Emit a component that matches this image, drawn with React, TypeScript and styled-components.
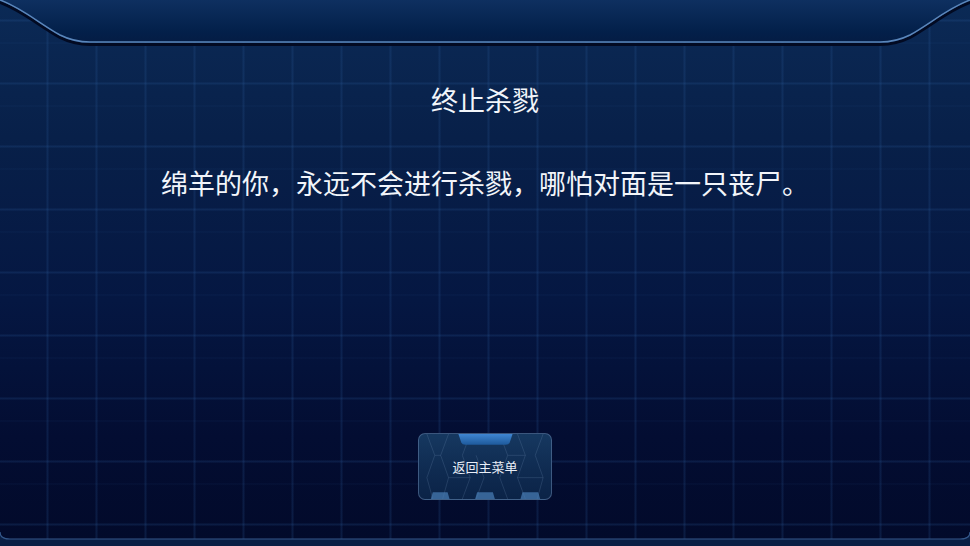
import React from 'react';
import styled, { createGlobalStyle } from 'styled-components';

const GlobalStyle = createGlobalStyle`
  html, body {
    margin: 0;
    padding: 0;
    background: #020a28;
  }
  * { box-sizing: border-box; }
`;

const Screen = styled.div`
  width: 970px;
  height: 546px;
  position: relative;
  overflow: hidden;
  display: flex;
  flex-direction: column;
  font-family: "Noto Sans CJK SC", "Noto Sans", sans-serif;
  color: #f2f5fa;
  background:
    repeating-linear-gradient(90deg,
      transparent 0 46px,
      rgba(45, 95, 160, 0.1) 46px 47px,
      rgba(45, 95, 160, 0.2) 47px 48px,
      rgba(45, 95, 160, 0.1) 48px 49px,
      transparent 49px 49px),
    repeating-linear-gradient(180deg,
      transparent 0 19px,
      rgba(45, 95, 160, 0.1) 19px 20px,
      rgba(45, 95, 160, 0.2) 20px 21px,
      rgba(45, 95, 160, 0.1) 21px 22px,
      transparent 22px 63px),
    repeating-linear-gradient(180deg,
      transparent 0 42px,
      rgba(45, 95, 160, 0.05) 42px 44px,
      transparent 44px 63px),
    linear-gradient(180deg, #0b2a56 0%, #082049 25%, #051742 55%, #030d32 80%, #020a2a 100%);
`;

const Bezel = styled.svg`
  display: block;
  width: 970px;
  height: 48px;
  flex: none;
`;

const BottomEdge = styled.svg`
  position: absolute;
  left: 0;
  bottom: 0;
  width: 970px;
  height: 14px;
  pointer-events: none;
`;

const Content = styled.main`
  flex: 1;
  display: flex;
  flex-direction: column;
  align-items: center;
  padding-bottom: 46px;
`;

const Title = styled.h1`
  margin: 34px 0 0;
  font-size: 27px;
  line-height: 36px;
  font-weight: 400;
`;

const Message = styled.p`
  margin: 47px 0 0;
  font-size: 27px;
  line-height: 36px;
  font-weight: 400;
`;

const MenuButton = styled.button`
  margin-top: auto;
  position: relative;
  width: 134px;
  height: 67px;
  padding: 0;
  border: 1px solid rgba(100, 130, 170, 0.55);
  border-radius: 7px;
  background: linear-gradient(180deg, #163860 0%, #0f2b51 55%, #0b2347 100%);
  color: #e8eef7;
  font-family: "Noto Sans CJK SC", sans-serif;
  font-size: 13px;
  cursor: pointer;
  overflow: hidden;
  > span {
    position: relative;
  }
`;

const ButtonArt = styled.svg`
  position: absolute;
  left: 0;
  top: 0;
  width: 100%;
  height: 100%;
`;

const Bezelshape = () => (
  <Bezel viewBox="0 0 970 48">
    <defs>
      <linearGradient id="bezelFill" x1="0" y1="0" x2="0" y2="1">
        <stop offset="0" stopColor="#0e3060" />
        <stop offset="0.75" stopColor="#03204a" />
        <stop offset="1" stopColor="#041c44" />
      </linearGradient>
    </defs>
    <path
      d="M0 0 L970 0 C948 8 930 24 910 35 C900 40 892 42 880 42 L90 42 C78 42 70 40 60 35 C40 24 22 8 0 0 Z"
      fill="url(#bezelFill)"
    />
    <path
      d="M0 2.5 C22 10.5 40 26.5 60 37.5 C70 42.5 78 44.5 90 44.5 L880 44.5 C892 44.5 900 42.5 910 37.5 C930 26.5 948 10.5 970 2.5"
      fill="none"
      stroke="#020a22"
      strokeWidth="3"
    />
    <path
      d="M0 0 C22 8 40 24 60 35 C70 40 78 42 90 42 L880 42 C892 42 900 40 910 35 C930 24 948 8 970 0"
      fill="none"
      stroke="#5a86bb"
      strokeWidth="1.6"
    />
  </Bezel>
);

const BottomFrame = () => (
  <BottomEdge viewBox="0 0 970 14">
    <path d="M0 0 Q0 7 10 7 L960 7 Q970 7 970 0 L970 14 L0 14 Z" fill="#0a1f45" />
    <path d="M0 0 Q0 7 10 7 L960 7 Q970 7 970 0" fill="none" stroke="#34578a" strokeWidth="1.2" />
  </BottomEdge>
);

const HexPattern = () => (
  <ButtonArt viewBox="0 0 134 67" preserveAspectRatio="none">
    <defs>
      <linearGradient id="tabTop" x1="0" y1="0" x2="0" y2="1">
        <stop offset="0" stopColor="#3f86d2" />
        <stop offset="1" stopColor="#1e5a9c" />
      </linearGradient>
    </defs>
    <g fill="none" stroke="rgba(130,160,200,0.2)" strokeWidth="1">
      <polyline points="8,0 16,22 8,45 14,67" />
      <polyline points="30,0 22,22 30,45 24,67" />
      <polyline points="52,0 44,22 52,45 44,67" />
      <polyline points="58,22 66,45 58,67" />
      <polyline points="82,0 90,22 82,45 90,67" />
      <polyline points="100,0 108,22 100,45 108,67" />
      <polyline points="126,0 118,22 126,45 120,67" />
      <line x1="16" y1="22" x2="22" y2="22" />
      <line x1="90" y1="22" x2="108" y2="22" />
      <line x1="30" y1="45" x2="52" y2="45" />
      <line x1="100" y1="45" x2="126" y2="45" />
    </g>
    <path d="M40 0 L95 0 L92 9 Q91 11 88 11 L47 11 Q44 11 43 9 Z" fill="url(#tabTop)" />
    <g fill="rgba(74,128,185,0.7)">
      <path d="M12 67 L14 60 L29 60 L31 67 Z" />
      <path d="M57 67 L59 60 L75 60 L77 67 Z" />
      <path d="M103 67 L105 60 L121 60 L123 67 Z" />
    </g>
  </ButtonArt>
);

export default function App() {
  return (
    <>
      <GlobalStyle />
      <Screen>
        <Bezelshape />
        <Content>
          <Title>终止杀戮</Title>
          <Message>绵羊的你，永远不会进行杀戮，哪怕对面是一只丧尸。</Message>
          <MenuButton>
            <HexPattern />
            <span>返回主菜单</span>
          </MenuButton>
        </Content>
        <BottomFrame />
      </Screen>
    </>
  );
}
